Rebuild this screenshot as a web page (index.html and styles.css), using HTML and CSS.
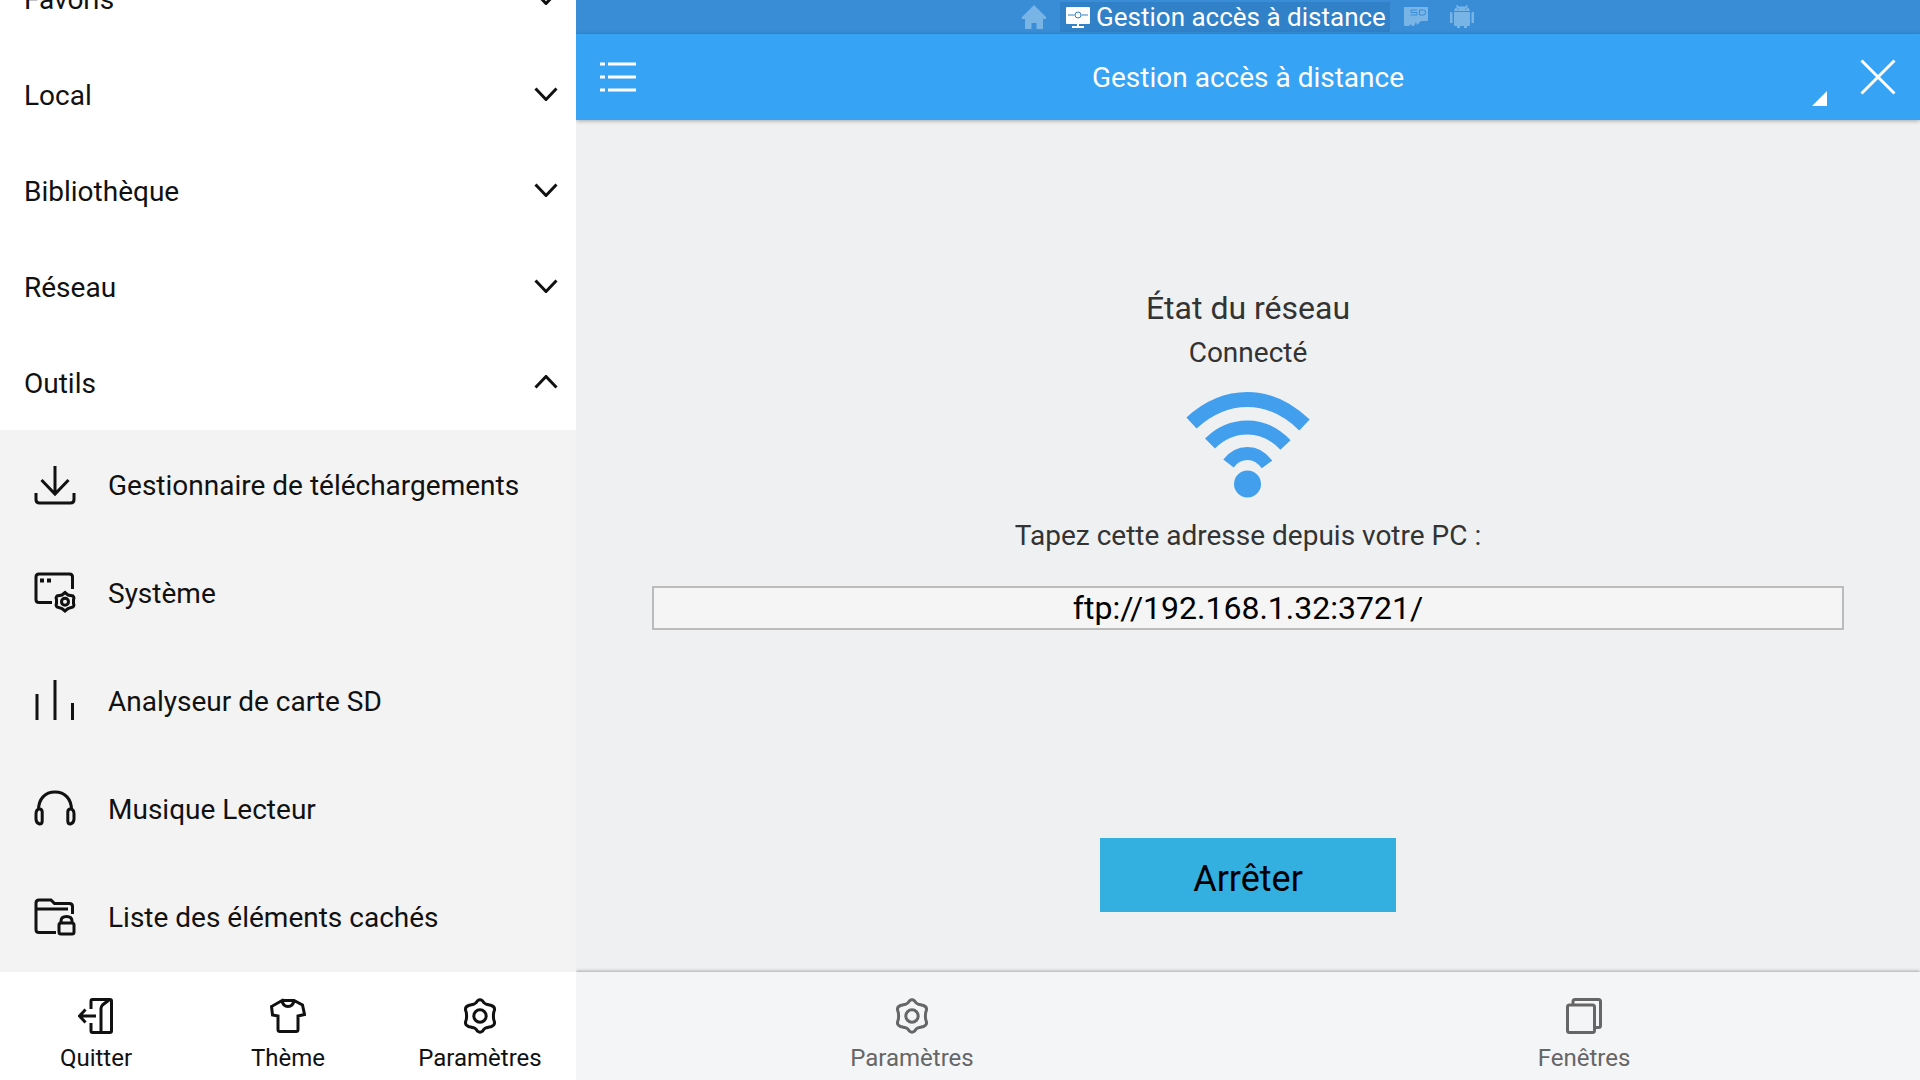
FILE: index.html
```html
<!DOCTYPE html>
<html lang="fr">

<head>
    <meta charset="UTF-8">
    <meta name="viewport" content="width=device-width, initial-scale=1.0">
    <title>Gestion accès à distance</title>
    <link rel="stylesheet" href="styles.css">
</head>

<body>
    <!-- shared icon shape -->
    <svg class="sprite" aria-hidden="true">
        <symbol id="gear" viewBox="0 0 36 36">
            <path d="M15.500 2.800q2.500-2 5 0l1.500 2q1 1 2.500 1.500l5 1.200q3.500 1.500 3 4.500l-.8 2.500q-.6 3.500 0 7l.8 2.500q.5 3-3 4.500l-5 1.200q-1.500.5-2.500 1.500l-1.500 2q-2.500 2-5 0l-1.500-2q-1-1-2.500-1.500l-5-1.200q-3.500-1.500-3-4.500l.8-2.500q.6-3.500 0-7l-.8-2.500q-.5-3 3-4.500l5-1.200q1.500-.5 2.500-1.500z" />
            <circle cx="18" cy="18" r="6.200" />
        </symbol>
    </svg>

    <aside class="sidebar">
        <nav class="menu">
            <button class="group">Favoris
                <svg class="chevron" viewBox="0 0 24 14"><path d="M1.500 1.500L12 12.500L22.500 1.500" /></svg>
            </button>
            <button class="group">Local
                <svg class="chevron" viewBox="0 0 24 14"><path d="M1.500 1.500L12 12.500L22.500 1.500" /></svg>
            </button>
            <button class="group">Bibliothèque
                <svg class="chevron" viewBox="0 0 24 14"><path d="M1.500 1.500L12 12.500L22.500 1.500" /></svg>
            </button>
            <button class="group">Réseau
                <svg class="chevron" viewBox="0 0 24 14"><path d="M1.500 1.500L12 12.500L22.500 1.500" /></svg>
            </button>
            <button class="group" aria-expanded="true">Outils
                <svg class="chevron" viewBox="0 0 24 14"><path d="M1.500 12.500L12 1.500L22.500 12.500" /></svg>
            </button>

            <div class="tools">
                <a href="#" class="tool">
                    <svg viewBox="0 0 44 44"><path d="M22 3V31M8.500 17L22 31L35.500 17M3 30V36.500Q3 40 6.500 40H37.500Q41 40 41 36.500V30" /></svg>
                    Gestionnaire de téléchargements
                </a>
                <a href="#" class="tool">
                    <svg viewBox="0 0 44 44">
                        <path d="M19 31.500H6Q3 31.500 3 28.500V6Q3 3 6 3H36.500Q39.500 3 39.500 6V18" />
                        <path class="solid" d="M7 7.500h4v4h-4zM14 7.500h4v4h-4z" />
                        <path d="M32 21.500L35 24L40 25Q41.500 26.500 40.500 28.500V32.500Q41.500 34.500 40 36L35 37.500L32 40L29 37.500L24 36Q22.500 34.500 23.500 32.500V28.500Q22.500 26.500 24 25L29 24Z" />
                        <circle cx="32" cy="30.700" r="3.500" />
                    </svg>
                    Système
                </a>
                <a href="#" class="tool">
                    <svg viewBox="0 0 44 44"><path d="M4 15V41M22 1V41M39.500 24V41" /></svg>
                    Analyseur de carte SD
                </a>
                <a href="#" class="tool">
                    <svg viewBox="0 0 44 44">
                        <path d="M5.500 23C5.500 12 12 5 22 5S38.500 12 38.500 23" />
                        <path d="M6.500 22Q9.200 22 9.200 25V34Q9.200 37 6.500 37Q3 36 3 32V27Q3 22 6.500 22ZM37.500 22Q34.800 22 34.800 25V34Q34.800 37 37.500 37Q41 36 41 32V27Q41 22 37.500 22Z" />
                    </svg>
                    Musique Lecteur
                </a>
                <a href="#" class="tool">
                    <svg viewBox="0 0 44 44">
                        <path d="M23 37.500H6Q3 37.500 3 34.500V8Q3 5 6 5H18L21.500 8.500H36.500Q39.500 8.500 39.500 11.500V19M3 14H35" />
                        <rect x="26" y="28" width="15" height="11" rx="2" />
                        <path d="M28 28V26Q28 21.500 33.500 21.500T39 26V28" />
                    </svg>
                    Liste des éléments cachés
                </a>
            </div>
        </nav>

        <footer class="actions">
            <button>
                <svg viewBox="0 0 36 36"><path d="M13 11V3Q13 1.500 14.500 1.500H32Q33.500 1.500 33.500 3V33Q33.500 34.500 32 34.500H14.500Q13 34.500 13 33V25M18 18H1.500M7.500 11.500L1.500 18L7.500 24.500M23 34V10.500Q23 8.500 24.500 7L31 2" /></svg>
                Quitter
            </button>
            <button>
                <svg viewBox="0 0 36 36"><path d="M12 2.500H24L32.500 7L34.500 16.500L28 18V31.500Q28 33.500 26 33.500H10Q8 33.500 8 31.500V18L2.500 17L1.500 8.500L12 2.500Q13 8.500 18 8.500T24 2.500" /></svg>
                Thème
            </button>
            <button>
                <svg><use href="#gear" /></svg>
                Paramètres
            </button>
        </footer>
    </aside>

    <main class="content">
        <nav class="tabs">
            <a href="#" class="tab" aria-label="Accueil">
                <svg viewBox="0 0 24 24"><path d="M12 0L0 12V14H3V24H9.500V18H14.500V24H21V14H24V12Z" /></svg>
            </a>
            <a href="#" class="tab active">
                <svg viewBox="0 0 24 24">
                    <path d="M1 2H23Q24 2 24 3V18Q24 19 23 19H13V21H18V23H6V21H11V19H1Q0 19 0 18V3Q0 2 1 2Z" />
                    <path class="link" d="M2 10H8.500M15.500 10H22" />
                    <circle class="link" cx="12" cy="10" r="3" />
                </svg>
                Gestion accès à distance
            </a>
            <a href="#" class="tab" aria-label="Carte SD">
                <svg viewBox="0 0 24 24">
                    <path d="M1 2H23Q24 2 24 3V15Q24 16 23 16H17L13 20L12 17L10 21H8L7 19L5 21H1Q0 21 0 20V3Q0 2 1 2Z" />
                    <path class="dim" d="M13 5H7V7.500H13V10H6.500M15.500 5V10H19.500Q21.500 10 21.500 7.500T19.500 5Z" />
                </svg>
            </a>
            <a href="#" class="tab" aria-label="Applications">
                <svg viewBox="0 0 24 24">
                    <path d="M4 6Q4.500 3 7 2L6 0H7.500L8.500 1.500H15.500L16.500 0H18L17 2Q19.500 3 20 6ZM4 7H20V20Q20 21 19 21H17V23H14V21H10V23H7V21H5Q4 21 4 20ZM0 8Q0 7 1 7T2.500 8V18H0ZM21.500 8Q21.500 7 23 7T24 8V18H21.500Z" />
                    <path class="dim" d="M7.500 4H9M15 4H16.500" />
                </svg>
            </a>
        </nav>

        <header class="toolbar">
            <button class="list" aria-label="Menu">
                <svg viewBox="0 0 36 30"><path d="M0 2H5M8 2H36M0 15H5M8 15H36M0 28H5M8 28H36" /></svg>
            </button>
            <h1>Gestion accès à distance</h1>
            <div class="tools-right">
                <button class="corner" aria-label="Plus">
                    <svg viewBox="0 0 16 16"><path d="M0 15L15 0V15Z" /></svg>
                </button>
                <button class="close" aria-label="Fermer">
                    <svg viewBox="0 0 36 36"><path d="M1.500 1.500L34.500 34.500M34.500 1.500L1.500 34.500" /></svg>
                </button>
            </div>
        </header>

        <section class="status">
            <h2>État du réseau</h2>
            <p>Connecté</p>
            <svg class="wifi" viewBox="0 0 124 106">
                <path d="M5.500 31Q31 7.500 61.500 7.500T118.500 33" stroke-width="15" />
                <path d="M24 51.500Q40 35.500 61.500 35.500T99.500 53" stroke-width="14" />
                <path d="M42.500 71.500Q50 61.500 61.500 61.500T81 72.500" stroke-width="13" />
                <circle cx="61.500" cy="92" r="13.500" />
            </svg>
            <label for="address">Tapez cette adresse depuis votre PC :</label>
            <input type="text" id="address" value="ftp://192.168.1.32:3721/" readonly>
            <button class="stop">Arrêter</button>
        </section>

        <footer class="actions bottom">
            <button>
                <svg><use href="#gear" /></svg>
                Paramètres
            </button>
            <button>
                <svg viewBox="0 0 36 36"><rect x="1.500" y="7" width="27" height="27.500" rx="2" /><path d="M7 6.500V3.500Q7 1.500 9 1.500H32.500Q34.500 1.500 34.500 3.500V27.500Q34.500 29.500 32.500 29.500H29" /></svg>
                Fenêtres
            </button>
        </footer>
    </main>
</body>

</html>
```
FILE: styles.css
```css
* {
    box-sizing: border-box;
}

body {
    display: flex;
    height: 100vh;
    margin: 0;
    overflow: hidden;
    font-family: Roboto, sans-serif;
    font-size: 28px;
    color: #111;
}

h1,
h2,
p {
    margin: 0;
    font-weight: 400;
}

button {
    padding: 0;
    border: 0;
    background: none;
    font: inherit;
    color: inherit;
    cursor: pointer;
}

a {
    color: inherit;
    text-decoration: none;
}

svg {
    display: block;
    flex-shrink: 0;
    fill: none;
    stroke: currentColor;
    stroke-width: 3;
}

.sprite {
    position: absolute;
    width: 0;
    height: 0;
}

/* left panel */
.sidebar {
    z-index: 1;
    display: flex;
    flex-direction: column;
    width: 30%;
    background: #fff;
}

/* the list is scrolled down to its end */
.menu {
    display: flex;
    flex: 1;
    flex-direction: column;
    justify-content: flex-end;
    min-height: 0;
    overflow: hidden;
}

.group {
    display: flex;
    flex-shrink: 0;
    align-items: center;
    justify-content: space-between;
    height: 96px;
    padding: 2px 18px 0 24px;
}

.chevron {
    width: 24px;
    height: 14px;
    margin-bottom: 2px;
}

.tools {
    flex-shrink: 0;
    padding-bottom: 2px;
    background: #f3f3f3;
}

.tool {
    display: flex;
    align-items: center;
    gap: 31px;
    height: 108px;
    padding: 2px 0 0 33px;
}

.tool svg {
    width: 44px;
    height: 44px;
}

.solid {
    fill: currentColor;
    stroke: none;
}

.actions {
    display: flex;
    height: 108px;
    font-size: 24px;
}

.actions button {
    display: flex;
    flex: 1;
    flex-direction: column;
    align-items: center;
    gap: 8px;
    padding-top: 26px;
    line-height: 32px;
}

.actions svg {
    width: 36px;
    height: 36px;
}

/* right panel */
.content {
    display: flex;
    flex: 1;
    flex-direction: column;
    background: #eef0f2;
}

.tabs {
    display: flex;
    align-items: center;
    justify-content: center;
    gap: 6px;
    height: 34px;
    background: #388dd6;
    color: #fff;
    font-size: 26px;
}

.tab {
    display: flex;
    align-items: center;
    gap: 6px;
    height: 30px;
    padding: 0 8px;
}

.tab svg {
    width: 24px;
    height: 24px;
    fill: #79b4e7;
    stroke: none;
}

.tab .dim {
    fill: none;
    stroke: #388dd6;
    stroke-width: 1;
}

.tab.active {
    padding: 0 4px 0 6px;
    background: #3081c8;
}

.tab.active svg {
    fill: #fff;
}

.tab .link {
    stroke: #3081c8;
    stroke-width: 1;
}

.toolbar {
    display: grid;
    grid-template-columns: 1fr auto 1fr;
    height: 86px;
    background: #36a3f4;
    box-shadow: 0 1px 4px rgba(0, 0, 0, 0.3);
    color: #fff;
}

.toolbar h1 {
    align-self: center;
    font-size: 28px;
}

.list {
    justify-self: start;
    padding-left: 24px;
}

.list svg {
    width: 36px;
    height: 30px;
}

.tools-right {
    display: flex;
    justify-content: flex-end;
}

.corner {
    align-self: flex-end;
    margin-bottom: 13px;
}

.corner svg {
    width: 16px;
    height: 16px;
    fill: #fff;
    stroke: none;
}

.close {
    padding: 0 24px 0 32px;
}

.close svg {
    width: 36px;
    height: 36px;
}

.status {
    display: flex;
    flex: 1;
    flex-direction: column;
    align-items: center;
    justify-content: flex-end;
    padding: 0 76px 60px;
    color: #333;
}

.status h2 {
    font-size: 32px;
    line-height: 44px;
}

.status p {
    line-height: 46px;
}

.wifi {
    width: 124px;
    height: 106px;
    margin: 16px 0;
    stroke: #429fed;
}

.wifi circle {
    fill: #429fed;
    stroke: none;
}

.status label {
    line-height: 44px;
}

.status input {
    width: 100%;
    height: 44px;
    margin: 28px 0 208px;
    padding: 0;
    border: 2px solid #bbb;
    background: #f5f5f5;
    font: inherit;
    font-size: 32px;
    color: #000;
    text-align: center;
}

.stop {
    width: 296px;
    height: 74px;
    padding-top: 8px;
    background: #33afe0;
    font-size: 36px;
    color: #000;
}

.bottom {
    background: #f4f5f7;
    box-shadow: 0 -1px 3px rgba(0, 0, 0, 0.3);
    color: #666;
}
```
